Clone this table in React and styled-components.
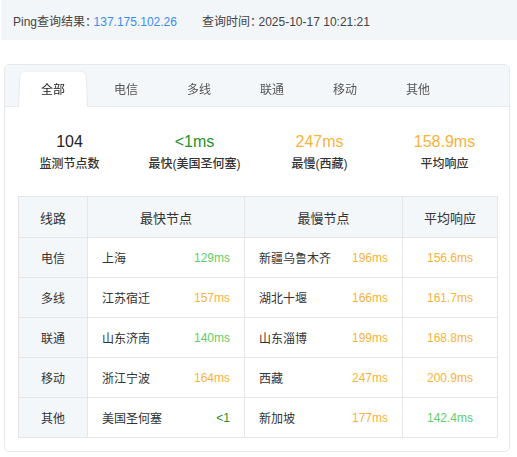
import styled, { createGlobalStyle } from "styled-components";

const GlobalStyle = createGlobalStyle`
  html, body {
    margin: 0;
    padding: 0;
    background: #fff;
  }
  body {
    font-family: "Liberation Sans", "Noto Sans CJK SC", sans-serif;
    color: #333;
  }
`;

const GREEN = "#5fcd6c";
const DARK_GREEN = "#24912c";
const ORANGE = "#f8b23c";

const colorOf = (tone) =>
  tone === "green" ? GREEN : tone === "dark" ? DARK_GREEN : ORANGE;

const tabs = ["全部", "电信", "多线", "联通", "移动", "其他"];

const stats = [
  { value: "104", label: "监测节点数", tone: "plain" },
  { value: "<1ms", label: "最快(美国圣何塞)", tone: "dark" },
  { value: "247ms", label: "最慢(西藏)", tone: "orange" },
  { value: "158.9ms", label: "平均响应", tone: "orange" },
];

const rows = [
  { line: "电信", fast: "上海", fastMs: "129ms", fastTone: "green", slow: "新疆乌鲁木齐", slowMs: "196ms", avg: "156.6ms", avgTone: "orange" },
  { line: "多线", fast: "江苏宿迁", fastMs: "157ms", fastTone: "orange", slow: "湖北十堰", slowMs: "166ms", avg: "161.7ms", avgTone: "orange" },
  { line: "联通", fast: "山东济南", fastMs: "140ms", fastTone: "green", slow: "山东淄博", slowMs: "199ms", avg: "168.8ms", avgTone: "orange" },
  { line: "移动", fast: "浙江宁波", fastMs: "164ms", fastTone: "orange", slow: "西藏", slowMs: "247ms", avg: "200.9ms", avgTone: "orange" },
  { line: "其他", fast: "美国圣何塞", fastMs: "<1", fastTone: "dark", slow: "新加坡", slowMs: "177ms", avg: "142.4ms", avgTone: "green" },
];

const TopBar = styled.div`
  height: 40px;
  margin-left: 1px;
  background: #f3f6f9;
  display: flex;
  align-items: center;
  padding-left: 12px;
  font-size: 12px;
  color: #444;
`;

const Field = styled.span`
  margin-right: 25px;
`;

const Colon = styled.span`
  letter-spacing: -3.5px;
`;

const Ip = styled.span`
  color: #3a8cf4;
`;

const Card = styled.div`
  margin: 24px 7px 0 4px;
  border: 1px solid #e6e8eb;
  border-radius: 5px;
  overflow: hidden;
  height: 388px;
  box-sizing: border-box;
`;

const TabBar = styled.div`
  display: flex;
  gap: 3px;
  padding: 4px 13px 0;
  background: #f4f7f9;
  border-bottom: 1px solid #e8ebee;
`;

const Tab = styled.div`
  position: relative;
  width: 70px;
  height: 38px;
  margin-bottom: -1px;
  display: flex;
  align-items: center;
  justify-content: center;
  font-size: 12px;
  color: ${({ $active }) => ($active ? "#222" : "#555")};
  z-index: 0;

  &::before {
    content: "";
    display: ${({ $active }) => ($active ? "block" : "none")};
    position: absolute;
    inset: 0;
    background: #fff;
    border: 1px solid #e6e8eb;
    border-bottom: none;
    border-radius: 6px 6px 0 0;
    transform: perspective(60px) rotateX(4deg);
    transform-origin: bottom;
    z-index: -1;
  }
`;

const Stats = styled.div`
  display: grid;
  grid-template-columns: repeat(4, 1fr);
  padding: 25px 2px 23px;
`;

const Stat = styled.div`
  display: flex;
  flex-direction: column;
  align-items: center;
`;

const StatValue = styled.div`
  font-size: 16px;
  line-height: 20px;
  color: ${({ $tone }) => ($tone === "plain" ? "#222" : colorOf($tone))};
`;

const StatLabel = styled.div`
  margin-top: 3px;
  font-size: 12px;
  line-height: 18px;
  font-weight: 500;
  color: #333;
`;

const Table = styled.table`
  margin: 0 13px;
  width: 479px;
  border-collapse: collapse;
  table-layout: fixed;
  font-size: 12px;
  color: #333;

  th,
  td {
    border: 1px solid #e6e6e6;
    padding: 0;
  }
`;

const Col = styled.col`
  width: ${({ $w }) => $w}px;
`;

const HeadCell = styled.th`
  height: 40px;
  background: #f4f7f9;
  font-size: 13px;
  font-weight: normal;
  text-align: center;
`;

const LineCell = styled.td`
  height: 39px;
  background: #f4f7f9;
  text-align: center;
`;

const NodeCell = styled.td`
  padding: 0 14px !important;
`;

const NodeInner = styled.div`
  display: flex;
  justify-content: space-between;
  align-items: center;
`;

const Ms = styled.span`
  color: ${({ $tone }) => colorOf($tone)};
`;

const AvgCell = styled.td`
  text-align: center;
  color: ${({ $tone }) => colorOf($tone)};
`;

export default function App() {
  return (
    <>
      <GlobalStyle />
      <TopBar>
        <Field>
          Ping查询结果<Colon>：</Colon>
          <Ip>137.175.102.26</Ip>
        </Field>
        <Field>
          查询时间<Colon>：</Colon>2025-10-17 10:21:21
        </Field>
      </TopBar>
      <Card>
        <TabBar>
          {tabs.map((t, i) => (
            <Tab key={t} $active={i === 0}>
              {t}
            </Tab>
          ))}
        </TabBar>
        <Stats>
          {stats.map((s) => (
            <Stat key={s.label}>
              <StatValue $tone={s.tone}>{s.value}</StatValue>
              <StatLabel>{s.label}</StatLabel>
            </Stat>
          ))}
        </Stats>
        <Table>
          <colgroup>
            <Col $w={69} />
            <Col $w={157} />
            <Col $w={158} />
            <Col $w={95} />
          </colgroup>
          <thead>
            <tr>
              <HeadCell>线路</HeadCell>
              <HeadCell>最快节点</HeadCell>
              <HeadCell>最慢节点</HeadCell>
              <HeadCell>平均响应</HeadCell>
            </tr>
          </thead>
          <tbody>
            {rows.map((r) => (
              <tr key={r.line}>
                <LineCell>{r.line}</LineCell>
                <NodeCell>
                  <NodeInner>
                    <span>{r.fast}</span>
                    <Ms $tone={r.fastTone}>{r.fastMs}</Ms>
                  </NodeInner>
                </NodeCell>
                <NodeCell>
                  <NodeInner>
                    <span>{r.slow}</span>
                    <Ms $tone="orange">{r.slowMs}</Ms>
                  </NodeInner>
                </NodeCell>
                <AvgCell $tone={r.avgTone}>{r.avg}</AvgCell>
              </tr>
            ))}
          </tbody>
        </Table>
      </Card>
    </>
  );
}
